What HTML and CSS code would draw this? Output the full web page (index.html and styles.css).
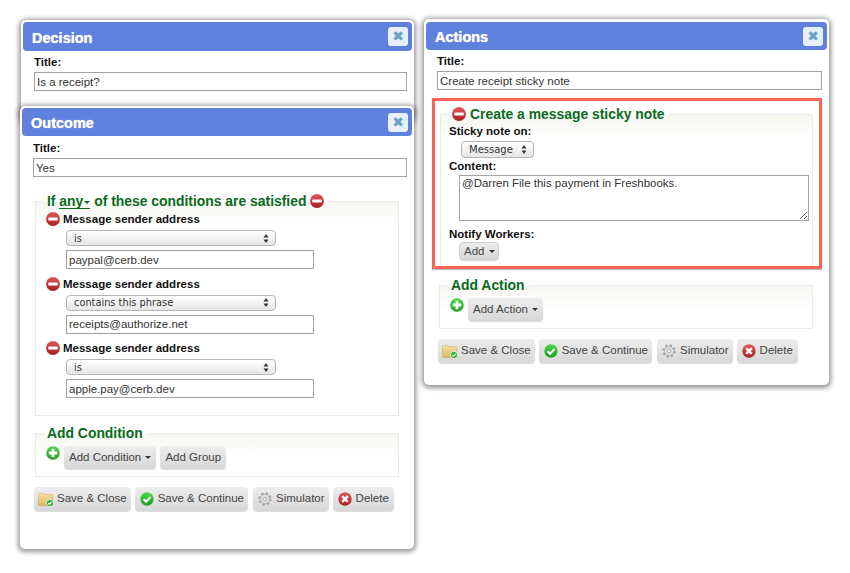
FILE: index.html
```html
<!DOCTYPE html>
<html lang="en">
<head>
    <meta charset="UTF-8">
    <meta name="viewport" content="width=device-width, initial-scale=1.0">
    <title>Behavior editor</title>
    <link rel="stylesheet" href="styles.css">
</head>
<body>
    <svg class="icon-defs" width="0" height="0" aria-hidden="true">
        <defs>
            <linearGradient id="red-grad" x1="0" y1="0" x2="0" y2="1">
                <stop offset="0" stop-color="#e2575a"/>
                <stop offset="1" stop-color="#a81d20"/>
            </linearGradient>
            <linearGradient id="green-grad" x1="0" y1="0" x2="0" y2="1">
                <stop offset="0" stop-color="#4fd84a"/>
                <stop offset="1" stop-color="#1f9e22"/>
            </linearGradient>
            <linearGradient id="folder-grad" x1="0" y1="0" x2="0" y2="1">
                <stop offset="0" stop-color="#f6e3a6"/>
                <stop offset="1" stop-color="#d9b565"/>
            </linearGradient>
            <symbol id="i-minus" viewBox="0 0 14 14">
                <circle cx="7" cy="7" r="6.9" fill="url(#red-grad)"/>
                <rect x="2.3" y="5.5" width="9.4" height="3" rx=".5" fill="#fff"/>
            </symbol>
            <symbol id="i-plus" viewBox="0 0 14 14">
                <circle cx="7" cy="7" r="6.8" fill="url(#green-grad)"/>
                <path d="M5.6 2.8h2.8v2.8h2.8v2.8H8.4v2.8H5.6V8.4H2.8V5.6h2.8z" fill="#fff"/>
            </symbol>
            <symbol id="i-folder" viewBox="0 0 16 16">
                <path d="M.5 3.5C.5 2.8 1 2.4 1.6 2.4h3.6l1.2 1.2h7.4c.6 0 1 .4 1 1v9.2c0 .5-.4 .9-1 .9H1.5c-.6 0-1-.4-1-.9z" fill="url(#folder-grad)" stroke="#c8a75d" stroke-width=".5"/>
                <circle cx="12" cy="12" r="3.6" fill="#2fae3a" stroke="#fff" stroke-width=".7"/>
                <path d="M10.3 12l1.2 1.2 2.2-2.3" fill="none" stroke="#fff" stroke-width="1.2"/>
            </symbol>
            <symbol id="i-check" viewBox="0 0 14 14">
                <circle cx="7" cy="7" r="6.7" fill="url(#green-grad)"/>
                <path d="M3.6 7.2l2.5 2.5 4.4-4.7" fill="none" stroke="#fff" stroke-width="2"/>
            </symbol>
            <symbol id="i-gear" viewBox="0 0 14 14">
                <circle cx="7" cy="7" r="5.6" fill="none" stroke="#a5a5a5" stroke-width="2.2" stroke-dasharray="2.2 2.2"/>
                <circle cx="7" cy="7" r="4.6" fill="#e4e4e4" stroke="#a0a0a0" stroke-width=".7"/>
                <circle cx="7" cy="7" r="2" fill="#e9e9e9" stroke="#a0a0a0" stroke-width=".8"/>
            </symbol>
            <symbol id="i-delete" viewBox="0 0 14 14">
                <circle cx="7" cy="7" r="6.7" fill="url(#red-grad)"/>
                <path d="M4.2 4.2l5.6 5.6M9.8 4.2l-5.6 5.6" fill="none" stroke="#fff" stroke-width="2.4"/>
            </symbol>
        </defs>
    </svg>

    <section class="panel panel-decision">
        <header class="panel-head">
            <h2>Decision</h2>
            <button class="close" type="button">&#10006;</button>
        </header>
        <div class="panel-body">
            <label class="field-label">Title:</label>
            <input class="title-input" type="text" value="Is a receipt?">
        </div>
    </section>

    <section class="panel panel-outcome">
        <header class="panel-head">
            <h2>Outcome</h2>
            <button class="close" type="button">&#10006;</button>
        </header>
        <div class="panel-body">
            <label class="field-label">Title:</label>
            <input class="title-input" type="text" value="Yes">

            <fieldset class="group group-conditions">
                <legend>If <span class="any">any<i class="caret"></i></span> of these conditions are satisfied <svg class="ico ico-legend"><use href="#i-minus"/></svg></legend>

                <div class="condition">
                    <div class="condition-label"><svg class="ico"><use href="#i-minus"/></svg>Message sender address</div>
                    <select class="mac-select"><option>is</option></select>
                    <input class="value-input" type="text" value="paypal@cerb.dev">
                </div>
                <div class="condition">
                    <div class="condition-label"><svg class="ico"><use href="#i-minus"/></svg>Message sender address</div>
                    <select class="mac-select"><option>contains this phrase</option></select>
                    <input class="value-input" type="text" value="receipts@authorize.net">
                </div>
                <div class="condition">
                    <div class="condition-label"><svg class="ico"><use href="#i-minus"/></svg>Message sender address</div>
                    <select class="mac-select"><option>is</option></select>
                    <input class="value-input" type="text" value="apple.pay@cerb.dev">
                </div>
            </fieldset>

            <fieldset class="group group-add">
                <legend>Add Condition</legend>
                <div class="add-row">
                    <svg class="ico ico-plus"><use href="#i-plus"/></svg>
                    <button class="btn" type="button">Add Condition <i class="caret"></i></button>
                    <button class="btn" type="button">Add Group</button>
                </div>
            </fieldset>

            <div class="actions">
                <button class="btn btn-save" type="button"><svg class="ico-folder"><use href="#i-folder"/></svg>Save &amp; Close</button>
                <button class="btn btn-cont" type="button"><svg class="ico"><use href="#i-check"/></svg>Save &amp; Continue</button>
                <button class="btn btn-sim" type="button"><svg class="ico"><use href="#i-gear"/></svg>Simulator</button>
                <button class="btn btn-del" type="button"><svg class="ico"><use href="#i-delete"/></svg>Delete</button>
            </div>
        </div>
    </section>

    <section class="panel panel-actions">
        <header class="panel-head">
            <h2>Actions</h2>
            <button class="close" type="button">&#10006;</button>
        </header>
        <div class="panel-body">
            <label class="field-label">Title:</label>
            <input class="title-input" type="text" value="Create receipt sticky note">

            <div class="highlight">
                <fieldset class="group group-sticky">
                    <legend><svg class="ico ico-legend-left"><use href="#i-minus"/></svg>Create a message sticky note</legend>
                    <label class="field-label">Sticky note on:</label>
                    <select class="mac-select mac-select-small"><option>Message</option></select>
                    <label class="field-label">Content:</label>
                    <textarea class="content-input">@Darren File this payment in Freshbooks.</textarea>
                    <label class="field-label">Notify Workers:</label>
                    <button class="btn btn-small" type="button">Add <i class="caret"></i></button>
                </fieldset>
            </div>

            <fieldset class="group group-add group-add-action">
                <legend>Add Action</legend>
                <div class="add-row">
                    <svg class="ico ico-plus"><use href="#i-plus"/></svg>
                    <button class="btn" type="button">Add Action <i class="caret"></i></button>
                </div>
            </fieldset>

            <div class="actions">
                <button class="btn btn-save" type="button"><svg class="ico-folder"><use href="#i-folder"/></svg>Save &amp; Close</button>
                <button class="btn btn-cont" type="button"><svg class="ico"><use href="#i-check"/></svg>Save &amp; Continue</button>
                <button class="btn btn-sim" type="button"><svg class="ico"><use href="#i-gear"/></svg>Simulator</button>
                <button class="btn btn-del" type="button"><svg class="ico"><use href="#i-delete"/></svg>Delete</button>
            </div>
        </div>
    </section>
</body>
</html>
```
FILE: styles.css
```css
body {
    margin: 0;
    height: 573px;
    overflow: hidden;
    position: relative;
    background-color: #fff;
    font-family: "Liberation Sans", Arial, sans-serif;
    font-size: 11.5px;
    color: #222;
}

.icon-defs {
    position: absolute;
}

.panel {
    position: absolute;
    box-sizing: border-box;
    padding: 2px;
    background-color: #fff;
    border-radius: 5px;
    box-shadow: 0 1px 5px 2px rgba(0, 0, 0, 0.42);
}

.panel-decision {
    left: 21px;
    top: 20px;
    width: 393px;
    height: 100px;
}

.panel-outcome {
    left: 20px;
    top: 106px;
    width: 394px;
    height: 443px;
}

.panel-actions {
    left: 424px;
    top: 19px;
    width: 405px;
    height: 366px;
    padding-top: 3px;
}

.panel-head {
    display: flex;
    align-items: center;
    justify-content: space-between;
    height: 28px;
    padding: 0 4px 0 9px;
    background-color: #5f80dc;
    border-radius: 4px;
}

.panel-decision .panel-head {
    height: 29px;
}

.panel-head h2 {
    margin: 2px 0 0;
    font-size: 14.5px;
    color: #fff;
    text-shadow: 0 0 1px #fff;
}

.close {
    width: 20px;
    height: 19px;
    padding: 0;
    border: none;
    border-radius: 3px;
    background-color: #e6f0fa;
    color: #6a9fc8;
    font-size: 14px;
    line-height: 19px;
    font-family: "DejaVu Sans", sans-serif;
}

.panel-body {
    padding: 5px 5px 0 11px;
}

.panel-decision .panel-body,
.panel-actions .panel-body {
    padding-top: 4px;
}

.field-label {
    display: block;
    font-weight: bold;
    line-height: 15px;
    color: #111;
}

input,
textarea {
    font-family: "Liberation Sans", Arial, sans-serif;
    font-size: 11.5px;
    color: #333;
    box-sizing: border-box;
    border: 1px solid #a3a3a3;
    border-radius: 0;
    padding: 0 2px;
    outline: none;
    background-color: #fff;
}

.title-input {
    display: block;
    width: 100%;
    height: 19px;
    margin-top: 2px;
}

.group {
    margin: 0;
    padding: 0;
    min-width: 0;
    border: 1px solid #ebebeb;
    background: linear-gradient(#f6f6f1, #fff) no-repeat 0 0 / 100% 24px;
}

.group legend {
    margin-left: 7px;
    padding: 0 4px 0 4px;
    font-size: 13.9px;
    font-weight: bold;
    line-height: 16px;
    color: #0a6b22;
}

.group-conditions {
    margin: 16px 8px 0 2px;
    height: 221px;
    box-sizing: content-box;
}

.any {
    display: inline-block;
    line-height: 14px;
    border-bottom: 1px solid #0a6b22;
}

.caret {
    display: inline-block;
    margin-left: 1px;
    vertical-align: middle;
    border: 3.5px solid transparent;
    border-top-color: currentColor;
    border-bottom: none;
}

.ico {
    width: 14px;
    height: 14px;
    flex: none;
}

.ico-legend {
    vertical-align: -2px;
}

.ico-legend-left {
    margin-right: 4px;
    vertical-align: -2px;
}

.condition {
    padding-left: 10px;
    margin-bottom: 6.5px;
}

.condition:first-of-type {
    margin-top: 2px;
}

.condition-label {
    display: flex;
    align-items: center;
    gap: 3px;
    height: 16px;
    font-weight: bold;
    color: #111;
}

.mac-select {
    display: block;
    appearance: none;
    box-sizing: border-box;
    width: 210px;
    height: 16px;
    margin: 3px 0 4px 20px;
    padding: 0 0 0 7px;
    border: 1px solid #b5b5b5;
    border-radius: 4px;
    font-family: "DejaVu Sans", sans-serif;
    font-size: 9.8px;
    color: #333;
    background:
        url("data:image/svg+xml,%3Csvg xmlns='http://www.w3.org/2000/svg' width='6' height='9'%3E%3Cpath d='M3 0l2.5 3.4h-5zM3 9L.5 5.6h5z' fill='%23333'/%3E%3C/svg%3E") no-repeat right 6px center,
        linear-gradient(#fff, #e6e6e6);
}

.value-input {
    display: block;
    width: 248px;
    height: 19px;
    margin-left: 20px;
}

.group-add {
    margin: 9px 8px 0 2px;
}

.add-row {
    display: flex;
    align-items: flex-start;
    gap: 4px;
    box-sizing: border-box;
    height: 35px;
    padding: 5px 0 0 10px;
}

.btn {
    display: inline-flex;
    align-items: center;
    box-sizing: border-box;
    height: 23px;
    padding: 0 5px 1px;
    border: none;
    border-radius: 4px;
    background: linear-gradient(#ededed, #d7d7d7);
    box-shadow: 0 1px 1px rgba(0, 0, 0, 0.15);
    font-family: "Liberation Sans", Arial, sans-serif;
    font-size: 11.5px;
    color: #444;
    white-space: pre;
}

.btn .caret {
    margin-left: 1px;
    color: #333;
}

.actions {
    display: flex;
    gap: 4px;
    margin-top: 10px;
    margin-left: 1px;
}

.actions .btn {
    height: 24px;
    padding: 0 4px 2px 5px;
}

.actions .btn .ico,
.actions .btn .ico-folder {
    margin-bottom: -2px;
}

.actions .btn-save {
    padding-left: 4px;
}

.actions .btn-sim {
    margin-left: 1px;
}

.actions .btn-del {
    padding-right: 5px;
}

.actions .ico {
    margin-right: 4px;
}

.ico-folder {
    width: 16px;
    height: 16px;
    margin-right: 3px;
}

.highlight {
    box-sizing: border-box;
    height: 171px;
    margin: 8px 0 0 -5px;
    padding: 5px 6px 0 5px;
    border: 3px solid #f96455;
    box-shadow: 0 1px 1px rgba(0, 0, 0, 0.25);
    overflow: hidden;
}

.group-sticky {
    padding: 2px 0 0 8px;
    border-bottom: none;
    height: 170px;
}

.group-sticky legend {
    margin-left: 0;
    padding: 0 4px 0 3px;
}

.mac-select-small {
    width: 73px;
    height: 17px;
    margin: 2px 0 1px 12px;
    font-size: 10px;
}

.content-input {
    display: block;
    width: 350px;
    height: 46px;
    margin: 1px 0 6px 10px;
    padding: 1px 2px;
}

.btn-small {
    display: flex;
    width: 40px;
    height: 18px;
    margin: 0 0 0 10px;
    padding: 0 4px;
    border: 1px solid #d0d0d0;
}

.group-add-action {
    margin: 8px 9px 0 2px;
}
```
